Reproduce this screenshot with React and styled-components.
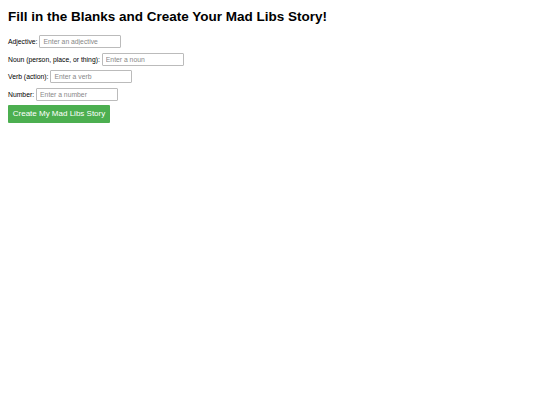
import React from "react";
import styled, { createGlobalStyle } from "styled-components";

const GlobalStyle = createGlobalStyle`
  body {
    margin: 0;
    font-family: "Liberation Sans", Arial, sans-serif;
    background: #fff;
    color: #000;
  }
`;

const Page = styled.div`
  padding: 9px 8px;
`;

const Title = styled.h1`
  font-size: 13.5px;
  font-weight: bold;
  margin: 0 0 10px 0;
  line-height: 16px;
`;

const Form = styled.form`
  display: flex;
  flex-direction: column;
  align-items: flex-start;
  gap: 4.5px;
`;

const Row = styled.div`
  display: flex;
  align-items: center;
  gap: 2px;
  height: 13px;
`;

const Label = styled.label`
  font-size: 6.8px;
  line-height: 13px;
`;

const Input = styled.input`
  box-sizing: border-box;
  width: 82px;
  height: 13px;
  padding: 0 3px;
  border: 1px solid #bbb;
  border-radius: 1px;
  font-family: "Liberation Sans", Arial, sans-serif;
  font-size: 6.8px;
  outline: none;
  &::placeholder {
    color: #888;
  }
`;

const Button = styled.button`
  height: 17.5px;
  width: 102px;
  padding: 0;
  background: #4caf50;
  color: #fff;
  border: none;
  border-radius: 1px;
  font-family: "Liberation Sans", Arial, sans-serif;
  font-size: 8px;
  cursor: pointer;
`;

const fields = [
  { id: "adjective", label: "Adjective:", placeholder: "Enter an adjective" },
  { id: "noun", label: "Noun (person, place, or thing):", placeholder: "Enter a noun" },
  { id: "verb", label: "Verb (action):", placeholder: "Enter a verb" },
  { id: "number", label: "Number:", placeholder: "Enter a number" },
];

export default function App() {
  return (
    <Page>
      <GlobalStyle />
      <Title>Fill in the Blanks and Create Your Mad Libs Story!</Title>
      <Form onSubmit={(e) => e.preventDefault()}>
        {fields.map((f) => (
          <Row key={f.id}>
            <Label htmlFor={f.id}>{f.label}</Label>
            <Input id={f.id} type="text" placeholder={f.placeholder} />
          </Row>
        ))}
        <Button type="submit">Create My Mad Libs Story</Button>
      </Form>
    </Page>
  );
}
